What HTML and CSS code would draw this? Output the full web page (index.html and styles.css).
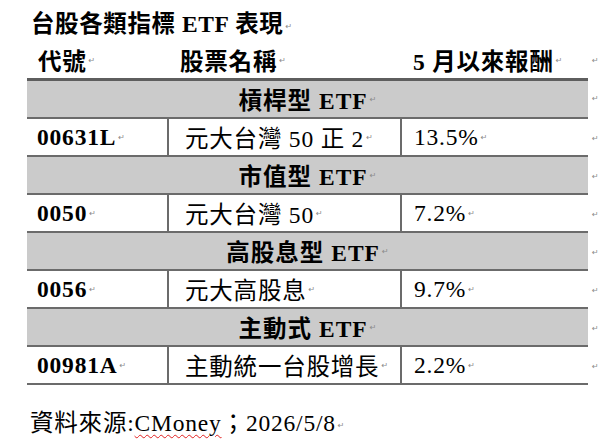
FILE: index.html
```html
<!DOCTYPE html>
<html lang="zh-Hant">
<head>
<meta charset="utf-8">
<title>台股各類指標 ETF 表現</title>
<link rel="stylesheet" href="styles.css">
</head>
<body>
<div class="page">
  <h1 class="title">台股各類指標 ETF 表現<span class="pm">↵</span></h1>
  <div class="tbl">
    <div class="row head">
      <div class="rb">
        <div class="c c1">代號<span class="pm">↵</span></div>
        <div class="c c2">股票名稱<span class="pm">↵</span></div>
        <div class="c c3">5 月以來報酬<span class="pm">↵</span></div>
      </div>
      <span class="eol">↵</span>
    </div>
    <div class="row cat first">
      <div class="rb">槓桿型 ETF<span class="pm">↵</span></div>
      <span class="eol">↵</span>
    </div>
    <div class="row data">
      <div class="rb">
        <div class="c c1 code">00631L<span class="pm">↵</span></div>
        <div class="c c2">元大台灣 50 正 2<span class="pm">↵</span></div>
        <div class="c c3">13.5%<span class="pm">↵</span></div>
      </div>
      <span class="eol">↵</span>
    </div>
    <div class="row cat">
      <div class="rb">市值型 ETF<span class="pm">↵</span></div>
      <span class="eol">↵</span>
    </div>
    <div class="row data">
      <div class="rb">
        <div class="c c1 code">0050<span class="pm">↵</span></div>
        <div class="c c2">元大台灣 50<span class="pm">↵</span></div>
        <div class="c c3">7.2%<span class="pm">↵</span></div>
      </div>
      <span class="eol">↵</span>
    </div>
    <div class="row cat">
      <div class="rb">高股息型 ETF<span class="pm">↵</span></div>
      <span class="eol">↵</span>
    </div>
    <div class="row data">
      <div class="rb">
        <div class="c c1 code">0056<span class="pm">↵</span></div>
        <div class="c c2">元大高股息<span class="pm">↵</span></div>
        <div class="c c3">9.7%<span class="pm">↵</span></div>
      </div>
      <span class="eol">↵</span>
    </div>
    <div class="row cat">
      <div class="rb">主動式 ETF<span class="pm">↵</span></div>
      <span class="eol">↵</span>
    </div>
    <div class="row data">
      <div class="rb">
        <div class="c c1 code">00981A<span class="pm">↵</span></div>
        <div class="c c2">主動統一台股增長<span class="pm">↵</span></div>
        <div class="c c3">2.2%<span class="pm">↵</span></div>
      </div>
      <span class="eol">↵</span>
    </div>
  </div>
  <p class="src">資料來源:<span class="sp">CMoney</span>；2026/5/8<span class="pm">↵</span></p>
</div>
</body>
</html>
```

FILE: styles.css
```css
html, body {
  margin: 0;
  padding: 0;
  background: #ffffff;
}
body {
  font-family: "Liberation Serif", "Noto Sans CJK TC", serif;
  color: #000;
  font-size: 23.5px;
}
.page {
  padding: 9px 0 0 27px;
}
.title {
  margin: 0;
  padding-left: 4px;
  height: 30px;
  line-height: 30px;
  font-size: 23.5px;
  font-weight: bold;
  letter-spacing: 0.6px;
}
.pm {
  font-family: "DejaVu Sans", sans-serif;
  font-size: 8px;
  font-weight: normal;
  letter-spacing: 0;
  color: #8a8a8a;
  margin-left: 2px;
  vertical-align: middle;
}
.tbl {
  display: flex;
  flex-direction: column;
}
.row {
  display: flex;
  align-items: center;
}
.rb {
  width: 561px;
  height: 36px;
  box-sizing: content-box;
  display: flex;
  align-items: center;
}
.eol {
  font-family: "DejaVu Sans", sans-serif;
  font-size: 8px;
  color: #8a8a8a;
  margin-left: 4px;
}
.head {
  padding-top: 3px;
}
.head .rb {
  font-weight: bold;
}
.head .c1 { padding-left: 11px; }
.head .c2 { padding-left: 11px; }
.head .c3 { padding-left: 11px; }
.c {
  height: 36px;
  display: flex;
  align-items: center;
  box-sizing: border-box;
  white-space: nowrap;
  letter-spacing: 0.8px;
}
.c1 { width: 142px; padding-left: 10px; }
.c2 { width: 233px; padding-left: 16px; }
.c3 { width: 186px; padding-left: 12px; }
.data .c1, .data .c2 {
  border-right: 2px solid #6b6b6b;
}
.data .rb {
  border-bottom: 2px solid #6b6b6b;
}
.code {
  font-weight: bold;
}
.cat .rb {
  background: #cbcbcb;
  justify-content: center;
  font-weight: bold;
  letter-spacing: 1px;
  border-bottom: 2px solid #6b6b6b;
}
.cat.first .rb {
  border-top: 3px solid #5e5e5e;
}
.src {
  margin: 23px 0 0 0;
  padding-left: 3px;
  line-height: 30px;
  font-size: 23.5px;
  letter-spacing: 0.8px;
}
.sp {
  text-decoration: underline wavy #e02020;
  text-decoration-thickness: 1px;
  text-underline-offset: 3px;
}
```
